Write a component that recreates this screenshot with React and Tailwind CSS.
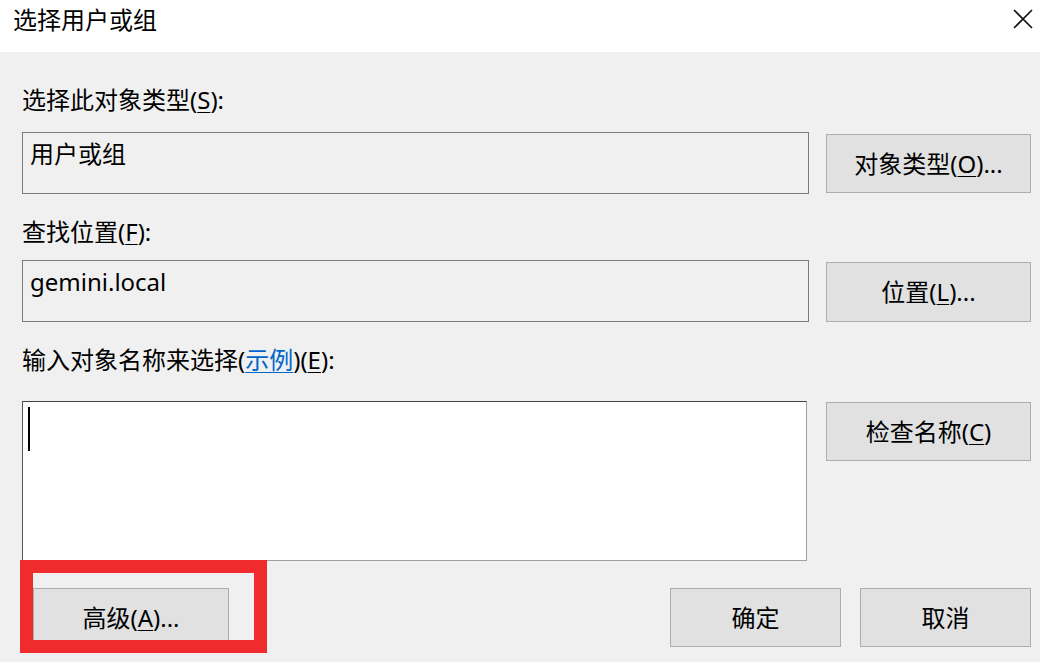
import React from 'react'

const font = { fontFamily: '"Noto Sans", "Noto Sans CJK SC", sans-serif' }

function Key({ children }) {
  return <span className="underline underline-offset-[3px] decoration-1">{children}</span>
}

function Button({ className = '', children }) {
  return (
    <div
      className={`flex items-center justify-center bg-[#e1e1e1] border border-[#adadad] text-[24px] leading-[30px] text-black ${className}`}
    >
      {children}
    </div>
  )
}

export default function App() {
  return (
    <div
      className="relative w-[1040px] h-[662px] overflow-hidden bg-[#f0f0f0] text-black"
      style={font}
    >
      <div className="h-[52px] bg-white flex items-start justify-between pl-[13px] pr-[4px]">
        <div className="pt-[4px] text-[24px] leading-[32px]">选择用户或组</div>
        <svg width="22" height="22" viewBox="0 0 22 22" className="mt-[8px] mr-[2px]">
          <path d="M2 2 L20 20 M20 2 L2 20" stroke="#111" strokeWidth="1.6" fill="none" />
        </svg>
      </div>

      <div className="pl-[22px] pr-[9px] pt-[36px]">
        <div className="h-[24px] leading-[24px] text-[24px]">
          选择此对象类型(<Key>S</Key>):
        </div>
        <div className="mt-[20px] flex gap-[17px] items-start">
          <div className="w-[787px] h-[62px] border border-[#7a7a7a] px-[7px] pt-[6px] text-[24px] leading-[30px]">
            用户或组
          </div>
          <Button className="w-[205px] h-[59px] mt-[2px]">
            对象类型(<Key>O</Key>)...
          </Button>
        </div>

        <div className="mt-[26px] h-[24px] leading-[24px] text-[24px]">
          查找位置(<Key>F</Key>):
        </div>
        <div className="mt-[16px] flex gap-[17px] items-start">
          <div className="w-[787px] h-[62px] border border-[#7a7a7a] px-[7px] pt-[6px] text-[24px] leading-[30px]">
            gemini.local
          </div>
          <Button className="w-[205px] h-[60px] mt-[2px]">
            位置(<Key>L</Key>)...
          </Button>
        </div>

        <div className="mt-[26px] h-[24px] leading-[24px] text-[24px]">
          输入对象名称来选择(<span className="text-[#0066cc] underline underline-offset-[3px] decoration-1">示例</span>)(<Key>E</Key>):
        </div>
        <div className="mt-[29px] flex gap-[19px] items-start">
          <div className="w-[785px] h-[160px] bg-white border border-[#a0a0a0] border-t-[#444] border-l-[#555] pl-[5px] pt-[5px]">
            <div className="w-[2px] h-[44px] bg-black" />
          </div>
          <Button className="w-[205px] h-[59px] mt-[1px]">
            检查名称(<Key>C</Key>)
          </Button>
        </div>

        <div className="mt-[27px] flex items-start">
          <Button className="ml-[11px] w-[196px] h-[59px]">
            高级(<Key>A</Key>)...
          </Button>
          <div className="flex-1" />
          <Button className="w-[171px] h-[59px]">确定</Button>
          <Button className="ml-[19px] w-[171px] h-[59px]">取消</Button>
        </div>
      </div>

      <div className="absolute left-[20px] top-[560px] w-[247px] h-[93px] border-[13px] border-[#ef2b2d]" />
    </div>
  )
}
